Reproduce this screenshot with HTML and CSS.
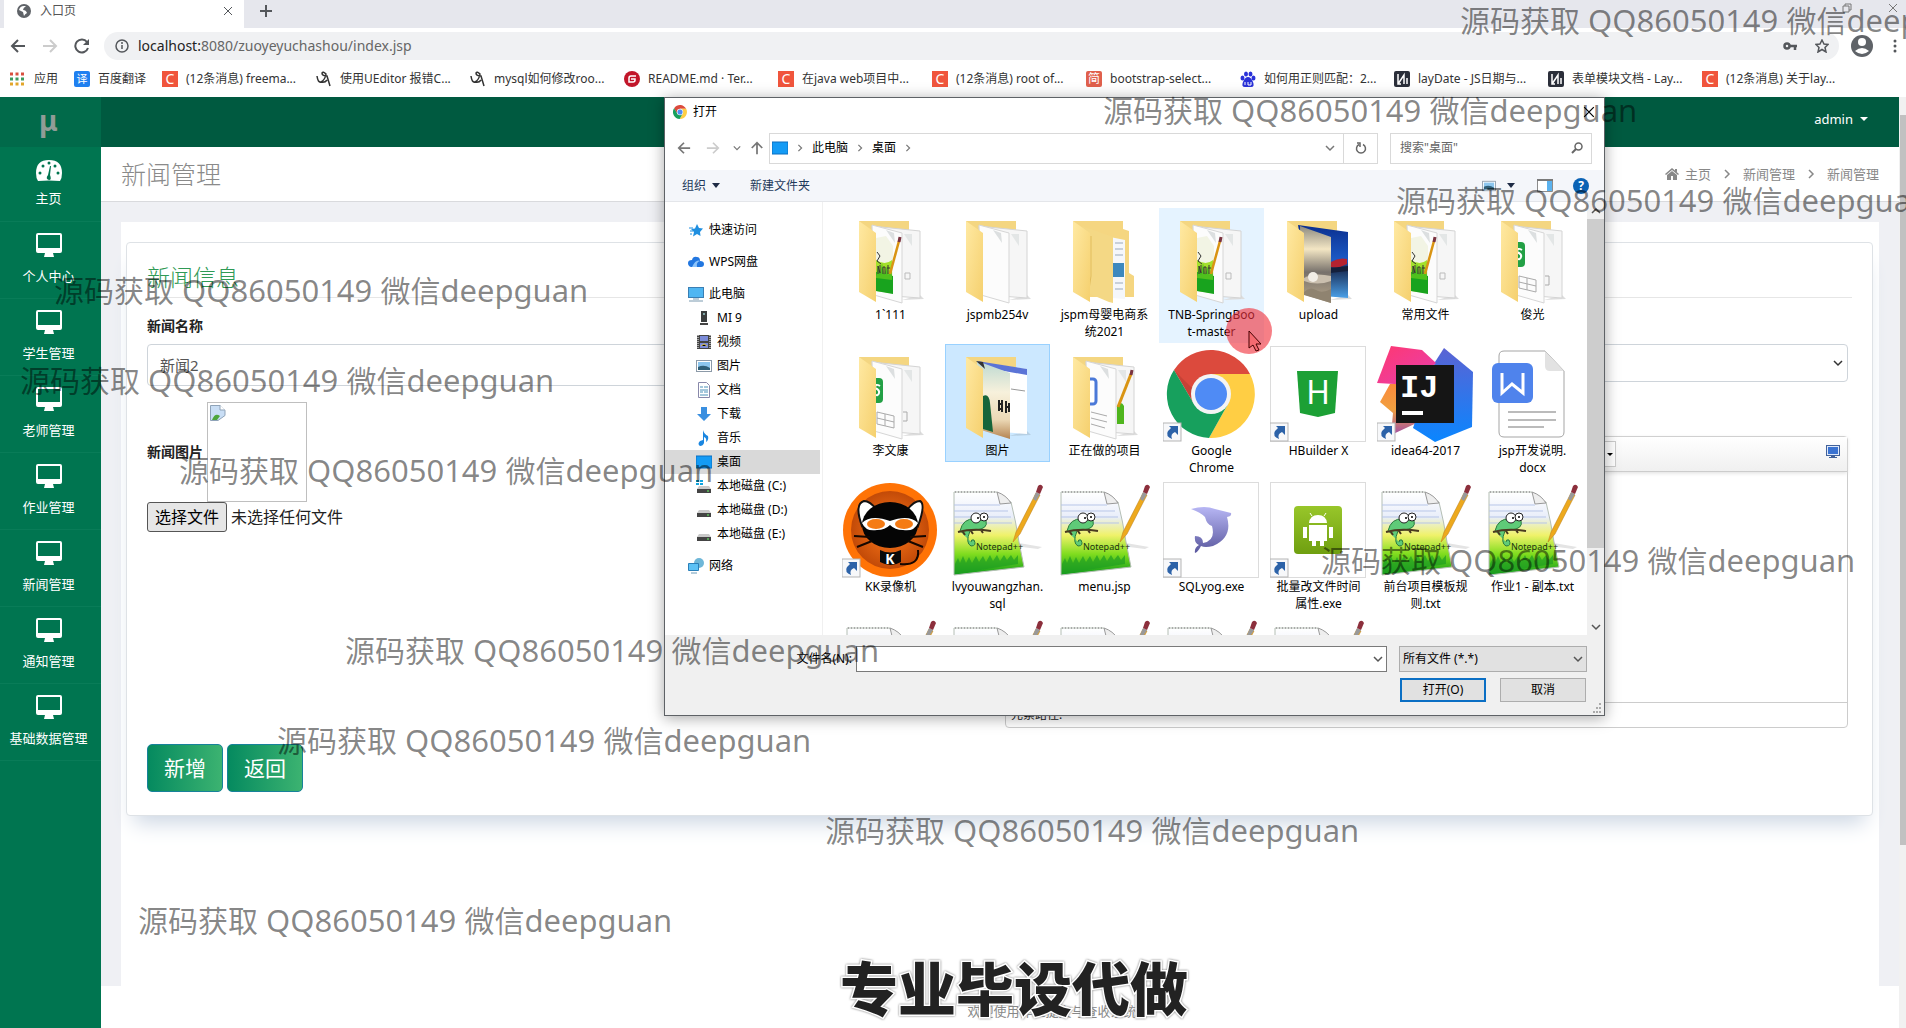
FILE: index.html
```html
<!DOCTYPE html>
<html lang="zh-CN">
<head>
<meta charset="utf-8">
<title>入口页</title>
<link rel="stylesheet" href="styles.css">
</head>
<body>
<svg class="sprite" aria-hidden="true">
  <defs>
    <linearGradient id="g-flap" x1="0" y1="0" x2="1" y2="1"><stop offset="0" stop-color="#ffe9a2"/><stop offset="1" stop-color="#f5d06e"/></linearGradient>
    <linearGradient id="g-note" x1="0" y1="0" x2="0" y2="1"><stop offset="0" stop-color="#fff"/><stop offset=".3" stop-color="#e9eefa"/><stop offset=".52" stop-color="#f0f26a"/><stop offset=".75" stop-color="#7fdc1e"/><stop offset="1" stop-color="#0c9a1c"/></linearGradient>
    <linearGradient id="g-sky" x1="0" y1="0" x2="0" y2="1"><stop offset="0" stop-color="#8d8a80"/><stop offset=".3" stop-color="#f3e6c4"/><stop offset=".6" stop-color="#77716b"/><stop offset="1" stop-color="#b9a88c"/></linearGradient>
    <linearGradient id="g-navy" x1="0" y1="0" x2="0" y2="1"><stop offset="0" stop-color="#0b2f8f"/><stop offset=".5" stop-color="#1c5cc8"/><stop offset=".6" stop-color="#182a52"/><stop offset="1" stop-color="#4aa0e8"/></linearGradient>
    <linearGradient id="g-poster" x1="0" y1="0" x2="0" y2="1"><stop offset="0" stop-color="#bcd9d2"/><stop offset=".4" stop-color="#f7f1dc"/><stop offset=".75" stop-color="#ecd9b6"/><stop offset="1" stop-color="#b48350"/></linearGradient>
    <linearGradient id="g-pink" x1="0" y1="0" x2="1" y2="1"><stop offset="0" stop-color="#fe3870"/><stop offset="1" stop-color="#e83fb0"/></linearGradient>
    <linearGradient id="g-blue" x1="0" y1="0" x2="0" y2="1"><stop offset="0" stop-color="#5b63d3"/><stop offset="1" stop-color="#0a86ff"/></linearGradient>
    <linearGradient id="g-orange" x1="0" y1="0" x2="0" y2="1"><stop offset="0" stop-color="#fb8a3c"/><stop offset=".5" stop-color="#f0a040"/><stop offset="1" stop-color="#a04da8"/></linearGradient>
    <linearGradient id="g-dolphin" x1="0" y1="0" x2="0" y2="1"><stop offset="0" stop-color="#b7b6f4"/><stop offset="1" stop-color="#5a589e"/></linearGradient>
    <linearGradient id="g-droid" x1="0" y1="0" x2="0" y2="1"><stop offset="0" stop-color="#98c62a"/><stop offset="1" stop-color="#6f9f10"/></linearGradient>
    <radialGradient id="g-kk"><stop offset="0" stop-color="#ff7a1a"/><stop offset="1" stop-color="#c24a08"/></radialGradient>

    <symbol id="folder-back" viewBox="0 0 96 96">
      <path d="M60 90l22-1-4-4z" fill="#ddd"/>
      <path d="M17 11h50v20H17z" fill="#f4d681"/>
      <path d="M30 16l48 5v67l-40-3z" fill="#f6f6f6" stroke="#d4d4d4"/>
      <path d="M62 24l8 12v-12z" fill="#e3e6e6"/>
      <path d="M30 15l30 8v70l-28-8z" fill="#fcfcfc" stroke="#d6d6d6"/>
      <path d="M44 20l8 3 1 10z" fill="#dcdfe0"/>
    </symbol>
    <symbol id="folder-flap" viewBox="0 0 96 96"><path d="M17 11l17 12v69l-17-10z" fill="url(#g-flap)"/></symbol>
    <symbol id="ico-empty" viewBox="0 0 96 96"><use href="#folder-back"/><use href="#folder-flap"/></symbol>
    <symbol id="ico-npp-folder" viewBox="0 0 96 96">
      <use href="#folder-back"/>
      <path d="M34 28l10-2 7 10v48l-17-3z" fill="#f2f4e4"/>
      <path d="M34 50q9 6 16 0v33l-16-2z" fill="#a4e02c"/><path d="M34 62l17 4v18l-17-3z" fill="#18a31e"/>
      <path d="M34 66l2-9 2 8 2-12 2 12 3-9 1 9 3-8 1 9v4l-16-2z" fill="#4fc11d"/>
      <path d="M35 42l3 4-3 5 4 3M36 64v-8l2 7v-8m3 9v-7h2v7m3 0v-9m-1 3h3" stroke="#333" fill="none"/>
      <path d="M57 31l-9 33" stroke="#d99413" stroke-width="2.500"/><path d="M58 27l-1 5" stroke="#7a3440" stroke-width="3"/>
      <path d="M63 63h5v6h-5z" fill="none" stroke="#bbb"/>
      <use href="#folder-flap"/>
    </symbol>
    <symbol id="ico-sheet-folder" viewBox="0 0 96 96">
      <use href="#folder-back"/>
      <path d="M30 32h7q4 0 4 4v17q0 4-4 4h-7z" fill="#23a045"/>
      <path d="M38 40q-5-3-5 2 5 2 4 5-1 4-5 1" stroke="#fff" stroke-width="2" fill="none"/>
      <path d="M35 66l17 4v12l-17-4zm0 6l17 4M43 68v12M61 66h4v9h-4" fill="none" stroke="#aaa"/>
      <use href="#folder-flap"/>
    </symbol>
    <symbol id="ico-closed-folder" viewBox="0 0 96 96">
      <path d="M17 11h50v8l6 2v42l5 3v21H30z" fill="#f5d681"/>
      <path d="M54 27l15 3v59l-13-1z" fill="#f5f7fa"/><path d="M59 33h8m-8 6h8m-8 6h8m-8 28h8m-8 6h8" stroke="#9aa9ba"/>
      <path d="M57 53h11v14H57z" fill="#3d88bd"/>
      <path d="M26 16l31 11v66l-4-1-19-8z" fill="#f4d885"/><path d="M35 26v40l-3 20" stroke="#e2bd5c" fill="none"/>
      <use href="#folder-flap"/>
    </symbol>
    <symbol id="ico-photo-folder" viewBox="0 0 96 96">
      <path d="M60 90l22-1-4-4z" fill="#ddd"/><path d="M17 11h50v20H17z" fill="#f4d681"/>
      <path d="M28 15l50 7v66l-38-3z" fill="url(#g-navy)"/><path d="M61 52q8-5 16-3v5l-9 4-7-1z" fill="#b52330"/><path d="M60 58l18-2v5l-18 2z" fill="#14203c"/>
      <path d="M30 16l31 11v66l-29-9z" fill="url(#g-sky)"/><path d="M34 68q10-6 27-2v5q-14 5-27 0z" fill="#cabfae"/><circle cx="43" cy="67" r="5" fill="#f2eee6"/><path d="M34 82q6-6 12-2t15-1v14l-27-8z" fill="#8f8370"/>
      <use href="#folder-flap"/>
    </symbol>
    <symbol id="ico-poster-folder" viewBox="0 0 96 96">
      <path d="M60 90l22-1-4-4z" fill="#b6cfe3"/><path d="M17 11h50v20H17z" fill="#f4d681"/>
      <path d="M28 16l50 7v65l-38-3z" fill="#fff"/><path d="M28 15l50 8v6L38 22z" fill="#5b74d6"/><path d="M62 43l14 2" stroke="#999"/>
      <path d="M28 15l33 12v66l-29-9z" fill="url(#g-poster)"/><path d="M50 54v11m3-11v12m4-11v12m3-10v9m-10-8h4m-4 5h4m2-2h4" stroke="#222" stroke-width="2"/>
      <path d="M34 50q6-3 7 7l3 29-10-3z" fill="#17653a"/><path d="M27 15l9 8-2-7z" fill="#333"/>
      <use href="#folder-flap"/>
    </symbol>
    <symbol id="ico-word-folder" viewBox="0 0 96 96">
      <use href="#folder-back"/>
      <rect x="28" y="33" width="12" height="25" rx="3" fill="#fff" stroke="#4b79d8" stroke-width="3"/>
      <path d="M35 66l16 4m-16 2l16 4m-16 2l14 4" stroke="#aaa"/>
      <path d="M61 60q4-6 7 0v18h-7z" fill="#4fb51d"/><path d="M75 28L62 61" stroke="#d99413" stroke-width="3"/><path d="M76 24l-1 5" stroke="#7a3440" stroke-width="3"/>
      <use href="#folder-flap"/>
    </symbol>
    <symbol id="ico-npp" viewBox="0 0 96 96">
      <path d="M64 60l29 5-4 2-24-3z" fill="#e4e4e4"/>
      <path d="M5 10h43q5 9 14 10 5 20 8 40l5 25L5 93z" fill="url(#g-note)" stroke="#b4beb4"/>
      <path d="M5 23h46M5 29h54M5 35h57M5 41h58" stroke="#b7c5e8"/>
      <path d="M6 10h42" stroke="#aaa" stroke-width="2" stroke-dasharray="1 2"/>
      <path d="M48 10l3 12 11-1q-5-8-14-11z" fill="#eee" stroke="#999"/>
      <path d="M6 82l3-6 2 5 3-7 3 7 3-6 3 6 4-7 3 6 4-6 3 6 4-7 3 6 4-6 3 6 4-6 3 5 4-5 3 5 4-5v9L6 92z" fill="#1f9e22" opacity=".7"/>
      <path d="M11 49q3-13 15-12l9-2q6 9-3 12l-11 2q-5 12 1 15 6 0 3-6-3-1-3 2" fill="#5fcb78" stroke="#2b7b3d"/>
      <path d="M9 50q15-4 33-1M14 50l2 3m6-4l2 3m8-4l2 3" stroke="#4a3a20" stroke-width="2" fill="none"/>
      <circle cx="27" cy="36" r="5" fill="#fff" stroke="#222"/><circle cx="35" cy="35" r="4" fill="#fff" stroke="#222"/><circle cx="29" cy="36" r="1"/><circle cx="35" cy="35" r="1"/>
      <text x="27" y="68" font-size="9" fill="#1b3310" class="svg-sans">Notepad++</text>
      <path d="M64 60l3-10 20-39 4 2-20 39z" fill="#eda91d" stroke="#b87c18" stroke-width=".5"/><path d="M84 17l3-7 4 2-4 7z" fill="#999"/><path d="M87 10l2-6q3-3 5 1l-3 7z" fill="#8c2f3c"/>
    </symbol>
    <symbol id="ico-chrome" viewBox="0 0 96 96">
      <path d="M11 24A44 44 0 0 1 87 28H48L31 58z" fill="#dc4a3d"/>
      <path d="M87 28A44 44 0 0 1 46 92L65 58 48 28z" fill="#ffce44"/>
      <path d="M46 92A44 44 0 0 1 11 24L31 58H65z" fill="#17a05d"/>
      <path d="M11 24l20 34 2-12z" fill="#a6372c" opacity=".4"/>
      <circle cx="48" cy="48" r="20" fill="#f4f4f4"/><circle cx="48" cy="48" r="16" fill="#4f8bf5"/>
    </symbol>
    <symbol id="shortcut" viewBox="0 0 96 96">
      <rect x="0" y="77" width="18" height="18" fill="#f7f8fa" stroke="#b5b5b5"/>
      <path d="M6 80h9v9l-3-3q-5 2-3 7-7-3-4-8l3-3z" fill="#2c62a8"/>
    </symbol>
    <symbol id="ico-hbuilder" viewBox="0 0 96 96">
      <rect width="95" height="95" x=".5" y=".5" fill="#fff" stroke="#dcdcdc"/>
      <path d="M27 25h41l-3 42-17 4-18-4z" fill="#1ca035"/><text x="48" y="58" font-size="32" text-anchor="middle" fill="#fff" class="svg-sans">H</text>
    </symbol>
    <symbol id="ico-idea" viewBox="0 0 96 96">
      <path d="M13 38L3 56l13 11-2 22 30-14-20-37z" fill="url(#g-orange)"/>
      <path d="M67 2l29 24-1 55-37 15-22-14L58 16z" fill="url(#g-blue)"/>
      <path d="M0 37L14 0l31 4 14 13-25 22z" fill="url(#g-pink)"/>
      <rect x="19" y="19" width="58" height="58" fill="#151515"/><text x="23" y="51" font-size="32" font-weight="bold" fill="#fff" class="svg-mono">IJ</text><path d="M25 65h21v4H25z" fill="#fff"/>
    </symbol>
    <symbol id="ico-docx" viewBox="0 0 96 96">
      <path d="M20 5h41l19 20v61q0 5-5 5H20q-5 0-5-5V10q0-5 5-5z" fill="#fff" stroke="#a5a5a5"/><path d="M61 5v15q0 5 5 5h14z" fill="#e2e2e2"/>
      <rect x="8" y="17" width="41" height="40" rx="6" fill="#4f83ec"/><path d="M18 27v20l10-9 11 9V27" fill="none" stroke="#fff" stroke-width="3"/>
      <path d="M24 66h48M24 74h48M24 81h36" stroke="#bbb" stroke-width="2"/>
    </symbol>
    <symbol id="ico-kk" viewBox="0 0 96 96">
      <circle cx="48" cy="48" r="47" fill="#ff7306"/><circle cx="48" cy="48" r="39" fill="url(#g-kk)"/>
      <path d="M20 44q-8-22 2-25 6 0 13 9zM76 44q8-22 2-25-6 0-13 9z" fill="#fff" stroke="#111" stroke-width="2"/>
      <ellipse cx="48" cy="43" rx="28" ry="23" fill="#050505"/>
      <path d="M20 41q9-9 28-2 19-7 28 2-4 9-15 7-8 0-13-5-5 5-13 5-11 2-15-7z" fill="#fff"/>
      <ellipse cx="34" cy="42" rx="9" ry="5" fill="#f57b14"/><ellipse cx="62" cy="42" rx="9" ry="5" fill="#f57b14"/>
      <path d="M12 54l16 1M15 65l15-6M84 54l-16 1M81 65l-15-6M58 82q20 2 18-14" stroke="#160700" stroke-width="2" fill="none"/>
      <path d="M38 68q10 5 21 0v12q-10 6-21 0z" fill="#0a0a0a"/><text x="48" y="82" font-size="14" font-weight="bold" text-anchor="middle" fill="#fff" class="svg-sans">K</text>
    </symbol>
    <symbol id="ico-dolphin" viewBox="0 0 96 96">
      <rect width="95" height="95" x=".5" y=".5" fill="#fff" stroke="#dcdcdc"/>
      <path d="M28 27q14-4 24 0l16 4q1 3-4 4 6 20-14 29-8 2-12 0-3 6-6 7-1-5 4-8-5-2-4-9 8 0 8 7 13-2 9-17-5-1-7-9-5-5-14-8z" fill="url(#g-dolphin)"/>
    </symbol>
    <symbol id="ico-android" viewBox="0 0 96 96">
      <rect width="95" height="95" x=".5" y=".5" fill="#fff" stroke="#dcdcdc"/>
      <rect x="24" y="24" width="48" height="48" rx="4" fill="url(#g-droid)"/>
      <path d="M39 41q1-8 9-8t9 8zM39 43h18v16H39zM33 45h4v11h-4zM59 45h4v11h-4zM42 57h4v7h-4zM50 57h4v7h-4z" fill="#fff"/><path d="M42 34l-2-3M54 34l2-3" stroke="#fff"/>
    </symbol>

    <symbol id="monitor" viewBox="0 0 28 24"><path d="M3 0h22q2 0 2 2v16q0 2-2 2h-7l1 4H9l1-4H3q-2 0-2-2V2q0-2 2-2zm0 2v13h22V2z" fill="#fff" fill-rule="evenodd"/></symbol>
    <symbol id="csdn" viewBox="0 0 16 16"><rect width="16" height="16" fill="#f0553c"/><text x="8" y="13" font-size="14" text-anchor="middle" fill="#fff" class="svg-sans">C</text></symbol>
    <symbol id="curl" viewBox="0 0 16 16"><path d="M1 5q1 7 4 6 4-2 5-8-3-3-4-1 0 3 5 3l3 10M5 11q4 1 6-2" fill="none" stroke="#333" stroke-width="1.500"/></symbol>
    <symbol id="layui" viewBox="0 0 16 16"><rect width="16" height="16" rx="2" fill="#2b2f3a"/><path d="M4 3v10h3M4 13l6-9v9m3-6v6" fill="none" stroke="#fff" stroke-width="1.500"/></symbol>
    <symbol id="disk" viewBox="0 0 16 16"><path d="M3 8h10l2 3H1z" fill="#c9c9c9"/><path d="M1 11h14v4H1z" fill="#444"/><path d="M11 13h2" stroke="#6f6"/></symbol>
    <symbol id="desk" viewBox="0 0 16 14"><rect width="16" height="12" y="1" fill="#149bf5" stroke="#0a6fc0"/></symbol>
    <symbol id="pic" viewBox="0 0 16 14"><rect x=".5" y="1.500" width="15" height="11" fill="#fff" stroke="#8c9aa8"/><path d="M2 3h12v8H2z" fill="#8cc6ee"/><path d="M2 8q6-3 12 1v2H2z" fill="#2f5f78"/></symbol>
    <symbol id="chev-d" viewBox="0 0 10 10"><path d="M1 3l4 4 4-4" fill="none" stroke="currentColor" stroke-width="1.500"/></symbol>
    <symbol id="chev-r" viewBox="0 0 10 10"><path d="M3 1l4 4-4 4" fill="none" stroke="currentColor" stroke-width="1.500"/></symbol>
    <symbol id="arrow" viewBox="0 0 16 16"><path d="M15 8H2m6-6L2 8l6 6" fill="none" stroke="currentColor" stroke-width="2"/></symbol>
    <symbol id="close" viewBox="0 0 10 10"><path d="M1 1l8 8M9 1L1 9" stroke="currentColor"/></symbol>
  </defs>
</svg>

<header class="browser">
  <div class="tabs">
    <div class="tab">
      <svg width="14" height="14" viewBox="0 0 14 14"><circle cx="7" cy="7" r="7" fill="#5f6368"/><path d="M7 2q-4 0-5 4l4 2 1 4q1-2 3-3-1-3-4-3 0-2 3-4z" fill="#fff"/></svg>
      <span class="tab-title">入口页</span>
      <svg class="dark" width="10" height="10"><use href="#close"/></svg>
    </div>
    <svg class="dark new-tab" width="14" height="14" viewBox="0 0 14 14"><path d="M7 1v12M1 7h12" stroke="currentColor" stroke-width="2"/></svg>
    <svg class="win-icon" width="10" height="10" viewBox="0 0 10 10"><path d="M3 3V1h6v6H7M1 3h6v6H1z" fill="none" stroke="#777"/></svg>
    <svg class="win-icon" width="10" height="10"><use href="#close"/></svg>
  </div>
  <div class="toolbar">
    <svg class="dark" width="16" height="16"><use href="#arrow"/></svg>
    <svg class="faint flip" width="16" height="16"><use href="#arrow"/></svg>
    <svg class="dark" width="16" height="16" viewBox="0 0 16 16"><path d="M13 4a6.500 6.500 0 1 0 1 6" fill="none" stroke="currentColor" stroke-width="2"/><path d="M15 1v6H9z" fill="currentColor"/></svg>
    <div class="omnibox">
      <svg class="dark" width="14" height="14" viewBox="0 0 14 14"><circle cx="7" cy="7" r="6" fill="none" stroke="currentColor" stroke-width="1.500"/><path d="M7 6v4M7 3v2" stroke="currentColor" stroke-width="1.500"/></svg>
      <span class="url"><b>localhost:</b>8080/zuoyeyuchashou/index.jsp</span>
      <svg class="dark" width="14" height="10" viewBox="0 0 14 10"><circle cx="4" cy="5" r="2.500" fill="none" stroke="currentColor" stroke-width="2.500"/><path d="M7 5h7M12 5v4" stroke="currentColor" stroke-width="2.500"/></svg>
      <svg class="dark" width="14" height="14" viewBox="0 0 14 14"><path d="M7 1l2 4 4 .5-3 3 1 4.500-4-2.500L3 13l1-4.500-3-3L5 5z" fill="none" stroke="currentColor" stroke-width="1.500"/></svg>
    </div>
    <svg width="22" height="22" viewBox="0 0 22 22"><circle cx="11" cy="11" r="11" fill="#5f6368"/><circle cx="11" cy="7" r="4" fill="#fff"/><path d="M4 16q7-6 14 0-7 6-14 0z" fill="#fff"/></svg>
    <svg class="dark" width="4" height="14" viewBox="0 0 4 14"><circle cx="2" cy="2" r="1.500"/><circle cx="2" cy="7" r="1.500"/><circle cx="2" cy="12" r="1.500"/></svg>
  </div>
  <nav class="bookmarks" aria-label="书签">
    <a href="#" class="bm bm-apps"><svg width="14" height="14" viewBox="0 0 14 14"><path d="M0 2h14" stroke="#d9503f" stroke-width="3" stroke-dasharray="3 2.500"/><path d="M0 7h14" stroke="#3c9a5f" stroke-width="3" stroke-dasharray="3 2.500"/><path d="M0 12h14" stroke="#e2a52a" stroke-width="3" stroke-dasharray="3 2.500"/></svg>应用</a>
    <a href="#" class="bm bm-short"><svg width="16" height="16" viewBox="0 0 16 16"><rect width="16" height="16" rx="2" fill="#1f80f0"/><text x="8" y="12" font-size="11" text-anchor="middle" fill="#fff" class="svg-sans">译</text></svg>百度翻译</a>
    <a href="#" class="bm"><svg width="16" height="16"><use href="#csdn"/></svg>(12条消息) freema...</a>
    <a href="#" class="bm"><svg width="16" height="16"><use href="#curl"/></svg>使用UEditor 报错C...</a>
    <a href="#" class="bm"><svg width="16" height="16"><use href="#curl"/></svg>mysql如何修改roo...</a>
    <a href="#" class="bm"><svg width="16" height="16" viewBox="0 0 16 16"><circle cx="8" cy="8" r="8" fill="#c2162a"/><path d="M12 5H7q-2 0-2 2v4h4q2 0 2-2V8H7" fill="none" stroke="#fff" stroke-width="1.500"/></svg>README.md · Ter...</a>
    <a href="#" class="bm"><svg width="16" height="16"><use href="#csdn"/></svg>在java web项目中...</a>
    <a href="#" class="bm"><svg width="16" height="16"><use href="#csdn"/></svg>(12条消息) root of...</a>
    <a href="#" class="bm"><svg width="16" height="16" viewBox="0 0 16 16"><rect width="16" height="16" rx="2" fill="#e0604c"/><text x="8" y="12" font-size="12" text-anchor="middle" fill="#fff" class="svg-sans">简</text></svg>bootstrap-select...</a>
    <a href="#" class="bm"><svg width="16" height="16" viewBox="0 0 16 16"><g fill="#2a32d8"><ellipse cx="2.500" cy="7" rx="2" ry="2.500"/><ellipse cx="6" cy="3" rx="2" ry="2.500"/><ellipse cx="10.500" cy="3" rx="2" ry="2.500"/><ellipse cx="13.500" cy="7" rx="2" ry="2.500"/><path d="M8 6q3 0 5 5t-2 5H5q-4 0-2-5 2-5 5-5z"/></g><path d="M5 11v3m3-3v3h3v-3" stroke="#fff" fill="none"/></svg>如何用正则匹配：2...</a>
    <a href="#" class="bm"><svg width="16" height="16"><use href="#layui"/></svg>layDate - JS日期与...</a>
    <a href="#" class="bm"><svg width="16" height="16"><use href="#layui"/></svg>表单模块文档 - Lay...</a>
    <a href="#" class="bm"><svg width="16" height="16"><use href="#csdn"/></svg>(12条消息) 关于lay...</a>
  </nav>
</header>

<div class="page">
  <aside class="side">
    <div class="brand">μ</div>
    <nav>
      <a href="#" class="side-item"><svg width="28" height="24" viewBox="0 0 28 24"><path d="M3 22Q1 19 1 14 1 1 14 1t13 13q0 5-2 8-11-1-22 0z" fill="#fff"/><g fill="#007550"><circle cx="5" cy="14" r="1.500"/><circle cx="8" cy="7" r="1.500"/><circle cx="14" cy="4" r="1.500"/><circle cx="20" cy="7" r="1.500"/><circle cx="23" cy="14" r="1.500"/><path d="M15 7h1l-1 9q2 5-1 5-4-1-1-5z"/></g></svg>主页</a>
      <a href="#" class="side-item"><svg width="28" height="24"><use href="#monitor"/></svg>个人中心</a>
      <a href="#" class="side-item"><svg width="28" height="24"><use href="#monitor"/></svg>学生管理</a>
      <a href="#" class="side-item"><svg width="28" height="24"><use href="#monitor"/></svg>老师管理</a>
      <a href="#" class="side-item"><svg width="28" height="24"><use href="#monitor"/></svg>作业管理</a>
      <a href="#" class="side-item"><svg width="28" height="24"><use href="#monitor"/></svg>新闻管理</a>
      <a href="#" class="side-item"><svg width="28" height="24"><use href="#monitor"/></svg>通知管理</a>
      <a href="#" class="side-item"><svg width="28" height="24"><use href="#monitor"/></svg>基础数据管理</a>
    </nav>
  </aside>
  <main class="main">
    <div class="topbar"><button type="button" class="user">admin</button></div>
    <div class="title-row">
      <h1>新闻管理</h1>
      <nav class="crumbs" aria-label="位置">
        <a href="#"><svg width="14" height="12" viewBox="0 0 14 12"><path d="M7 0l7 6-1 1-6-5-6 5-1-1zM10 1h2v3l-2-1zM7 3l5 4v5H8V8H6v4H2V7z" fill="#888"/></svg>主页</a>
        <svg width="10" height="10"><use href="#chev-r"/></svg>
        <a href="#">新闻管理</a>
        <svg width="10" height="10"><use href="#chev-r"/></svg>
        <span>新闻管理</span>
      </nav>
    </div>
    <div class="content">
      <div class="panel">
        <form class="card">
          <h2>新闻信息</h2>
          <div class="form-grid">
            <div>
              <label class="lbl" for="name">新闻名称</label>
              <input class="text-in" id="name" type="text" value="新闻2">
              <div class="image-row">
                <label class="lbl" for="photo">新闻图片</label>
                <div class="thumb"><svg width="16" height="16" viewBox="0 0 16 16"><path d="M.5.500H10l5 5v5l-7 5H.5z" fill="#c9def5" stroke="#8fa3b8"/><path d="M2 15q3-8 8-4l-3 4z" fill="#4da63c"/><path d="M10 0v5h5" fill="#fff" stroke="#8fa3b8"/></svg></div>
              </div>
              <div class="file-row">
                <input class="file-in" type="file" id="photo">
                <label class="file-btn" for="photo">选择文件</label><span>未选择任何文件</span>
              </div>
            </div>
            <div>
              <label class="lbl" for="kind">新闻类型</label>
              <div class="select-wrap"><select class="select-in" id="kind"><option></option></select><svg width="10" height="10"><use href="#chev-d"/></svg></div>
              <label class="lbl detail-lbl" for="detail">新闻详情</label>
              <div class="editor">
                <div class="ed-bar">
                  <button type="button" class="ed-drop" aria-label="更多"></button>
                  <svg width="14" height="14" viewBox="0 0 14 14"><rect x=".5" y=".5" width="13" height="10" fill="#dfe9fa" stroke="#42629b"/><path d="M2 2h10v7H2z" fill="#3b73d1"/><path d="M5 11h4v1h2v1H3v-1h2z" fill="#42629b"/></svg>
                </div>
                <textarea id="detail"></textarea>
                <div class="ed-path">元素路径:</div>
              </div>
            </div>
          </div>
          <div class="actions"><button type="button" class="btn">新增</button><button type="button" class="btn">返回</button></div>
        </form>
      </div>
    </div>
    <footer class="foot">欢迎使用作业提交与查收系统</footer>
  </main>
  <div class="page-scroll"><div class="page-thumb"></div></div>
</div>

<section class="dialog" role="dialog" aria-label="打开">
  <div class="dlg-title"><svg width="14" height="14" viewBox="4 4 88 88"><use href="#ico-chrome" width="96" height="96"/></svg><span>打开</span><svg class="dlg-close" width="12" height="12"><use href="#close"/></svg></div>
  <div class="dlg-nav">
    <svg class="grey" width="14" height="14"><use href="#arrow"/></svg>
    <svg class="faint flip" width="14" height="14"><use href="#arrow"/></svg>
    <svg class="grey recent" width="8" height="8"><use href="#chev-d"/></svg>
    <svg class="grey up" width="14" height="14"><use href="#arrow"/></svg>
    <div class="addr">
      <svg width="16" height="14"><use href="#desk"/></svg>
      <svg class="grey" width="8" height="8"><use href="#chev-r"/></svg><span>此电脑</span>
      <svg class="grey" width="8" height="8"><use href="#chev-r"/></svg><span>桌面</span>
      <svg class="grey" width="8" height="8"><use href="#chev-r"/></svg>
      <svg class="grey addr-drop" width="10" height="10"><use href="#chev-d"/></svg>
      <button type="button" class="refresh" aria-label="刷新"><svg width="12" height="12" viewBox="0 0 12 12"><path d="M8 2.500a4.500 4.500 0 1 1-4 0M2 1h3v4" fill="none" stroke="#666" stroke-width="1.500"/></svg></button>
    </div>
    <div class="search"><input type="search" aria-label="搜索" placeholder='搜索"桌面"'><svg width="12" height="12" viewBox="0 0 12 12"><circle cx="7.500" cy="4.500" r="3.500" fill="none" stroke="#666" stroke-width="1.500"/><path d="M5 7l-4 4" stroke="#666" stroke-width="2"/></svg></div>
  </div>
  <div class="dlg-tools">
    <button type="button">组织<i class="tri"></i></button>
    <button type="button">新建文件夹</button>
    <svg class="view" width="14" height="12"><use href="#pic"/></svg><i class="tri"></i>
    <svg class="split" width="16" height="13" viewBox="0 0 16 13"><path d="M.5.500h15v12H.5z" fill="#fff" stroke="#8c8c8c"/><path d="M10 1h5v11h-5z" fill="#5bb2ee"/><path d="M0 1h16" stroke="#7a7a7a" stroke-width="2"/></svg>
    <svg width="16" height="16" viewBox="0 0 16 16"><circle cx="8" cy="8" r="8" fill="#0b63b5"/><text x="8" y="12" font-size="12" font-weight="bold" text-anchor="middle" fill="#fff" class="svg-sans">?</text></svg>
  </div>
  <div class="dlg-body">
    <nav class="tree" aria-label="位置">
      <a href="#" class="root"><svg width="16" height="16" viewBox="0 0 16 16"><path d="M9 2l2 4 4 .5-3 3.500.5 4-3.500-2-4 2.500 1-4.500-3-3 4-.5z" fill="#1f8fe0"/><path d="M1 6h4M2 9h3M2 12h2" stroke="#1f8fe0"/></svg>快速访问</a>
      <a href="#" class="root"><svg width="16" height="16" viewBox="0 0 16 16"><path d="M3 13q-3-1-3-4t4-3q1-4 5-3 3 0 3 4 4 0 4 3t-3 3z" fill="#2277e0"/><path d="M4 13q4-8 8-6-4 1-3 6z" fill="#8cc4fb"/></svg>WPS网盘</a>
      <a href="#" class="root"><svg width="16" height="16" viewBox="0 0 16 16"><rect x=".5" y="1.500" width="15" height="10" fill="#4fb6f2" stroke="#3a7fb4"/><path d="M5 13h6M1 15h14" stroke="#7a9ab0"/></svg>此电脑</a>
      <a href="#"><svg width="16" height="16" viewBox="0 0 16 16"><path d="M5 1h6v11H5z" fill="#3a3d3d"/><circle cx="8" cy="4" r="1" fill="#9cc"/><path d="M4 14h8" stroke="#444" stroke-width="2"/></svg>MI 9</a>
      <a href="#"><svg width="16" height="16" viewBox="0 0 16 16"><path d="M1 1h14v14H1z" fill="#444"/><path d="M4 2h8v5H4zM4 9h8v5H4z" fill="#7b8bd8"/><path d="M2 1v14M14 1v14" stroke="#fff" stroke-dasharray="1 1"/><path d="M5 12l3-2 3 2" stroke="#e3c54f"/></svg>视频</a>
      <a href="#"><svg width="16" height="14"><use href="#pic"/></svg>图片</a>
      <a href="#"><svg width="16" height="16" viewBox="0 0 16 16"><path d="M2.500.500h8l3 3v12h-11z" fill="#fff" stroke="#88a"/><path d="M4 5h3m1 0h4M4 8h8M4 10h3m1 0h4M4 13h8" stroke="#4a90b8"/></svg>文档</a>
      <a href="#"><svg width="16" height="16" viewBox="0 0 16 16"><path d="M5 1h6v7h4l-7 7-7-7h4z" fill="#3a8fe0"/></svg>下载</a>
      <a href="#"><svg width="16" height="16" viewBox="0 0 16 16"><path d="M7 0q1 4 5 6 1 4-2 6 1-4-2-5v6q-1 3-4 3-3-2 0-5l3-1z" fill="#1a86e0"/></svg>音乐</a>
      <a href="#" class="on"><svg width="16" height="14"><use href="#desk"/></svg>桌面</a>
      <a href="#"><svg width="16" height="16" viewBox="0 0 16 16"><path d="M0 2h3v2H0zM4 2h3v2H4zM0 5h3v2H0zM4 5h3v2H4z" fill="#12a5e0"/><use href="#disk"/></svg>本地磁盘 (C:)</a>
      <a href="#"><svg width="16" height="16"><use href="#disk"/></svg>本地磁盘 (D:)</a>
      <a href="#"><svg width="16" height="16"><use href="#disk"/></svg>本地磁盘 (E:)</a>
      <a href="#" class="root last"><svg width="16" height="16" viewBox="0 0 16 16"><circle cx="11" cy="5" r="5" fill="#6fb7d8"/><path d="M.5 5.500h10v7H.5z" fill="#5cc1f5" stroke="#2a7fb8"/><path d="M3 15h6" stroke="#6a9ab8"/></svg>网络</a>
    </nav>
    <div class="files">
      <div class="file"><svg><use href="#ico-npp-folder"/></svg>1`111</div>
      <div class="file"><svg><use href="#ico-empty"/></svg>jspmb254v</div>
      <div class="file"><svg><use href="#ico-closed-folder"/></svg>jspm母婴电商系<br>统2021</div>
      <div class="file hover"><svg><use href="#ico-npp-folder"/></svg>TNB-SpringBoo<br>t-master</div>
      <div class="file"><svg><use href="#ico-photo-folder"/></svg>upload</div>
      <div class="file"><svg><use href="#ico-npp-folder"/></svg>常用文件</div>
      <div class="file"><svg><use href="#ico-sheet-folder"/></svg>俊光</div>

      <div class="file"><svg><use href="#ico-sheet-folder"/></svg>李文康</div>
      <div class="file picked"><svg><use href="#ico-poster-folder"/></svg>图片</div>
      <div class="file"><svg><use href="#ico-word-folder"/></svg>正在做的项目</div>
      <div class="file"><svg><use href="#ico-chrome"/><use href="#shortcut"/></svg>Google<br>Chrome</div>
      <div class="file"><svg><use href="#ico-hbuilder"/><use href="#shortcut"/></svg>HBuilder X</div>
      <div class="file"><svg><use href="#ico-idea"/><use href="#shortcut"/></svg>idea64-2017</div>
      <div class="file"><svg><use href="#ico-docx"/></svg>jsp开发说明.<br>docx</div>

      <div class="file"><svg><use href="#ico-kk"/><use href="#shortcut"/></svg>KK录像机</div>
      <div class="file"><svg><use href="#ico-npp"/></svg>lvyouwangzhan.<br>sql</div>
      <div class="file"><svg><use href="#ico-npp"/></svg>menu.jsp</div>
      <div class="file"><svg><use href="#ico-dolphin"/><use href="#shortcut"/></svg>SQLyog.exe</div>
      <div class="file"><svg><use href="#ico-android"/><use href="#shortcut"/></svg>批量改文件时间<br>属性.exe</div>
      <div class="file"><svg><use href="#ico-npp"/></svg>前台项目模板规<br>则.txt</div>
      <div class="file"><svg><use href="#ico-npp"/></svg>作业1 - 副本.txt</div>

      <div class="file"><svg><use href="#ico-npp"/></svg></div>
      <div class="file"><svg><use href="#ico-npp"/></svg></div>
      <div class="file"><svg><use href="#ico-npp"/></svg></div>
      <div class="file"><svg><use href="#ico-npp"/></svg></div>
      <div class="file"><svg><use href="#ico-npp"/></svg></div>
    </div>
    <div class="dlg-scroll">
      <svg class="flip-v" width="10" height="10"><use href="#chev-d"/></svg>
      <div class="dlg-thumb"></div>
      <svg width="10" height="10"><use href="#chev-d"/></svg>
    </div>
  </div>
  <div class="dlg-foot">
    <div class="foot-row">
      <label for="fname">文件名(N):</label>
      <div class="combo"><input id="fname" type="text"><svg width="10" height="10"><use href="#chev-d"/></svg></div>
      <div class="filter"><select aria-label="文件类型"><option>所有文件 (*.*)</option></select><svg width="10" height="10"><use href="#chev-d"/></svg></div>
    </div>
    <div class="foot-row foot-btns">
      <button type="button" class="dlg-btn primary">打开(O)</button>
      <button type="button" class="dlg-btn">取消</button>
    </div>
    <svg class="grip" width="10" height="10" viewBox="0 0 10 10"><path d="M7 1h2M4 5h2M7 5h2M1 9h2M4 9h2M7 9h2" stroke="#aaa" stroke-width="2"/></svg>
  </div>
</section>

<svg class="pointer" width="48" height="48" viewBox="0 0 48 48"><circle cx="24" cy="24" r="23" fill="#f0303c" fill-opacity=".62"/><path d="M24 24v17l4-3 3 6 3-1-3-6h5z" fill="#f46a70" stroke="#400" stroke-width="1"/></svg>

<div class="marks" aria-hidden="true">
  <span class="mark m1">源码获取<b> QQ86050149 </b>微信<b>deepguan</b></span>
  <span class="mark m2">源码获取<b> QQ86050149 </b>微信<b>deepguan</b></span>
  <span class="mark m3">源码获取<b> QQ86050149 </b>微信<b>deepguan</b></span>
  <span class="mark m4">源码获取<b> QQ86050149 </b>微信<b>deepguan</b></span>
  <span class="mark m5">源码获取<b> QQ86050149 </b>微信<b>deepguan</b></span>
  <span class="mark m6">源码获取<b> QQ86050149 </b>微信<b>deepguan</b></span>
  <span class="mark m7">源码获取<b> QQ86050149 </b>微信<b>deepguan</b></span>
  <span class="mark m8">源码获取<b> QQ86050149 </b>微信<b>deepguan</b></span>
  <span class="mark m9">源码获取<b> QQ86050149 </b>微信<b>deepguan</b></span>
  <span class="mark m10">源码获取<b> QQ86050149 </b>微信<b>deepguan</b></span>
  <span class="mark m11">源码获取<b> QQ86050149 </b>微信<b>deepguan</b></span>
</div>
<p class="caption">专业毕设代做</p>
</body>
</html>
```
FILE: styles.css
```css
* { box-sizing: border-box; }
body {
  margin: 0;
  min-height: 100vh;
  display: flex;
  flex-direction: column;
  position: relative;
  overflow: hidden;
  background: #fff;
  color: #222;
  font: 12px/16px "Noto Sans", "Noto Sans CJK SC", sans-serif;
}
a { color: inherit; text-decoration: none; }
button, input, select, textarea { font: inherit; color: inherit; }
svg { flex: none; display: block; }
.sprite { position: absolute; width: 0; height: 0; }
.svg-sans { font-family: "Noto Sans", "Noto Sans CJK SC", sans-serif; }
.svg-mono { font-family: "Liberation Mono", monospace; }
.dark { color: #54575b; fill: currentColor; }
.faint { color: #ccc; }
.grey { color: #777; }
.flip { transform: scaleX(-1); }
.flip-v { transform: scaleY(-1); }
.up { transform: rotate(90deg); }

/* Browser frame */
.browser { flex: none; }
.tabs { display: flex; align-items: flex-start; height: 28px; padding-left: 4px; background: #e6e7ed; }
.tab { display: flex; align-items: center; width: 240px; height: 28px; padding: 0 11px 6px 13px; background: #fff; }
.tab-title { flex: 1; margin-left: 9px; color: #555; }
.new-tab { margin: 4px auto 0 15px; }
.win-icon { margin: 3px 8px 0 28px; color: #777; }
.toolbar { display: flex; align-items: center; gap: 16px; height: 36px; padding: 0 9px 0 10px; }
.omnibox { flex: 1; display: flex; align-items: center; gap: 18px; height: 28px; margin-left: -2px; padding: 0 10px 0 11px; border-radius: 14px; background: #f0f1f3; }
.url { flex: 1; margin-left: -9px; font-size: 14px; line-height: 20px; color: #666; }
.url b { font-weight: normal; color: #222; }
.toolbar > svg:last-child { margin-left: 4px; }
.omnibox + svg { margin-left: -4px; }
.bookmarks { display: flex; align-items: center; height: 33px; padding: 0 10px 4px; overflow: hidden; }
.bm { flex: none; display: flex; align-items: center; gap: 8px; width: 154px; color: #333; white-space: nowrap; }
.bm-apps { gap: 10px; width: 64px; }
.bm-short { width: 88px; }

/* Admin page */
.page { flex: 1; display: flex; }
.side { flex: none; width: 101px; background: #007550; color: #fff; }
.brand { display: flex; align-items: center; justify-content: center; height: 50px; padding: 0 4px 4px 0; background: #016a4a; color: #919c97; font-size: 28px; font-weight: bold; line-height: 32px; }
.side-item { display: flex; flex-direction: column; align-items: center; gap: 10px; height: 77px; padding: 11px 4px 0 0; border-bottom: 1px solid #097c58; font-size: 13px; line-height: 18px; white-space: nowrap; }
.side-item:first-child { padding-top: 12px; height: 75px; gap: 6px; }
.main { flex: 1; display: flex; flex-direction: column; min-width: 0; }
.topbar { display: flex; align-items: center; justify-content: flex-end; height: 50px; padding: 0 31px 6px; background: #005a40; }
.user { display: flex; align-items: center; gap: 7px; padding: 0; border: 0; background: none; color: #fff; font-size: 13px; line-height: 18px; }
.user::after { content: ""; border: 4px solid transparent; border-top-color: #fff; border-bottom: 0; }
.title-row { display: flex; align-items: center; justify-content: space-between; height: 55px; padding: 0 20px; border-bottom: 1px solid #d9dadd; }
h1 { margin: 0; font-size: 25px; font-weight: 300; line-height: 32px; color: #8a8a8a; }
.crumbs { display: flex; align-items: center; gap: 11px; font-size: 13px; line-height: 18px; color: #888; }
.crumbs a { display: flex; align-items: center; gap: 6px; }
.content { padding: 20px 20px 0; background: #eff0f4; }
.panel { padding: 20px 6px 170px 5px; background: #fff; }
.card { border: 1px solid #dee2e6; border-radius: 4px; box-shadow: 0 15px 20px -8px #ccd6e3; padding: 0 20px 23px; background: #fff; }
h2 { margin: 0; height: 55px; padding-top: 18px; border-bottom: 1px solid #e6e6e6; font-size: 23px; font-weight: 300; line-height: 32px; color: #2f9a55; }
.form-grid { display: grid; grid-template-columns: 1fr 1fr; gap: 15px; padding: 18px 4px 0 0; }
.lbl { display: block; font-size: 14px; font-weight: bold; line-height: 20px; }
.text-in { display: block; width: 100%; height: 42px; margin-top: 8px; padding: 0 12px 2px; border: 1px solid #ced4da; border-radius: 4px; font-size: 15px; color: #555; }
.image-row { display: flex; align-items: center; gap: 4px; margin-top: 16px; }
.thumb { width: 100px; height: 100px; padding: 2px; border: 1px solid #bfbfbf; }
.file-row { display: flex; align-items: center; gap: 4px; font-size: 16px; line-height: 24px; }
.file-in { position: absolute; width: 1px; height: 1px; opacity: 0; }
.file-btn { padding: 2px 7px; border: 1px solid #555; border-radius: 3px; background: #e6e6e6; color: #000; }
.select-wrap { position: relative; margin-top: 8px; }
.select-in { display: block; width: 100%; height: 38px; appearance: none; border: 1px solid #ced4da; border-radius: 4px; background: #fff; }
.select-wrap svg { position: absolute; right: 5px; top: 14px; color: #333; }
.detail-lbl { margin: 26px 0 8px; }
.editor { border: 1px solid #ccc; border-radius: 4px; }
.ed-bar { display: flex; align-items: center; justify-content: flex-end; gap: 210px; height: 35px; padding: 0 7px 4px; background: linear-gradient(#fff, #f0f0f0); border-bottom: 1px solid #ccc; box-shadow: 0 1px 4px #ddd; }
.ed-drop { display: flex; align-items: center; justify-content: center; width: 12px; height: 26px; margin-top: 4px; padding: 0; border: 1px solid #ccc; background: #fff; }
.ed-drop::after { content: ""; border: 3px solid transparent; border-top-color: #000; border-bottom: 0; }
.editor textarea { display: block; width: 100%; height: 230px; border: 0; resize: none; background: none; }
.ed-path { height: 25px; padding: 4px 5px; border-top: 1px solid #ccc; }
.actions { display: flex; gap: 4px; padding-top: 16px; }
.btn { width: 76px; height: 48px; padding: 0; border: 1px solid #17829a; border-radius: 5px; background: linear-gradient(90deg, #058a5f, #3cb371); color: #fff; font-size: 21px; line-height: 28px; }
.foot { flex: 1; padding: 16px 0 0 104px; color: #888; font-size: 13px; line-height: 18px; text-align: center; }
.page-scroll { flex: none; width: 7px; padding: 18px 0 0 1px; background: #f1f1f1; }
.page-thumb { height: 80%; background: #c1c1c1; }

/* File dialog */
.dialog { position: absolute; left: 664px; top: 97px; width: 941px; border: 1px solid #5e6266; background: #fff; box-shadow: 0 2px 14px rgba(0, 0, 0, .35); color: #000; }
.dlg-title { display: flex; align-items: center; gap: 6px; height: 28px; padding: 0 9px 0 8px; }
.dlg-close { margin-left: auto; }
.dlg-nav { display: flex; align-items: center; gap: 15px; height: 44px; padding: 0 12px; }
.dlg-nav .recent { margin-left: -2px; }
.dlg-nav .up { margin-left: -6px; }
.addr { flex: 1; display: flex; align-items: center; gap: 8px; height: 31px; margin-left: -10px; padding-left: 2px; border: 1px solid #d9d9d9; }
.addr-drop { margin-left: auto; }
.refresh { display: flex; align-items: center; justify-content: center; width: 34px; height: 29px; padding: 0; border: 0; border-left: 1px solid #d9d9d9; background: none; }
.search { display: flex; align-items: center; width: 202px; height: 31px; margin-left: -3px; padding: 0 8px 0 9px; border: 1px solid #d9d9d9; }
.search input { flex: 1; min-width: 0; padding: 0; border: 0; outline: 0; }
.search input::placeholder { color: #666; opacity: 1; }
.dlg-tools { display: flex; align-items: center; height: 32px; padding: 0 15px 0 17px; background: #f4f6fa; border-bottom: 1px solid #e4e6ea; color: #1e395b; }
.dlg-tools button { display: flex; align-items: center; gap: 6px; margin-right: 30px; padding: 0; border: 0; background: none; }
.tri { border: 4px solid transparent; border-top: 5px solid #1e2b45; border-bottom: 0; }
.dlg-tools .view { margin: 0 11px 0 auto; }
.dlg-tools .split { margin: 0 20px 0 22px; }
.dlg-body { display: flex; height: 433px; }
.tree { flex: none; width: 158px; padding-top: 8px; border-right: 1px solid #f0f0f0; }
.tree a { display: flex; align-items: center; gap: 5px; height: 24px; margin-right: 2px; padding-left: 31px; white-space: nowrap; }
.tree .root { margin: 8px 0 0; padding-left: 23px; }
.tree .on { background: #d9d9d9; }
.files { flex: 1; display: grid; grid-template-columns: repeat(7, 105px); grid-auto-rows: 136px; align-items: start; column-gap: 2px; padding: 6px 0 0 15px; overflow: hidden; text-align: center; line-height: 17px; }
.file { min-height: 117px; padding: 1px 3px 2px; border: 1px solid transparent; white-space: nowrap; }
.file svg { width: 96px; height: 96px; }
.hover { background: #e5f3ff; }
.picked { background: #cce8ff; border-color: #99d1ff; }
.dlg-scroll { flex: none; display: flex; flex-direction: column; align-items: center; width: 17px; padding: 4px 0 3px; background: #f0f0f0; color: #555; }
.dlg-thumb { width: 17px; height: 329px; margin: 3px 0 auto; background: #cdcdcd; }
.dlg-foot { position: relative; padding: 11px 17px 13px; background: #f0f0f0; }
.foot-row { display: flex; align-items: center; justify-content: flex-end; gap: 12px; }
.foot-row label { margin-right: -8px; }
.combo, .filter { position: relative; height: 26px; }
.combo { width: 531px; }
.filter { width: 188px; }
.combo input, .filter select { display: block; width: 100%; height: 26px; padding: 0 3px; appearance: none; border: 1px solid #7a7a7a; border-radius: 0; background: #fff; }
.filter select { border-color: #adadad; background: #e1e1e1; }
.combo svg, .filter svg { position: absolute; right: 4px; top: 8px; color: #555; }
.foot-btns { gap: 14px; padding: 6px 1px 0 0; }
.dlg-btn { width: 86px; height: 24px; padding: 0; border: 1px solid #adadad; background: #e1e1e1; }
.primary { border: 2px solid #0b6fc4; }
.grip { position: absolute; right: 2px; bottom: 2px; }
.pointer { position: absolute; left: 1225px; top: 307px; }

/* Overlay text across the whole screen */
.marks { position: absolute; inset: 0; overflow: hidden; pointer-events: none; }
.mark { position: absolute; font-size: 30px; line-height: 40px; white-space: nowrap; color: rgba(0, 0, 0, .48); }
.mark b { font-size: 31px; font-weight: normal; }
.m1 { left: 1460px; top: 0; }
.m2 { left: 1103px; top: 90px; }
.m3 { left: 1396px; top: 180px; }
.m4 { left: 54px; top: 270px; }
.m5 { left: 20px; top: 360px; }
.m6 { left: 179px; top: 450px; }
.m7 { left: 345px; top: 630px; }
.m8 { left: 277px; top: 720px; }
.m9 { left: 825px; top: 810px; }
.m10 { left: 138px; top: 900px; }
.m11 { left: 1321px; top: 540px; }
.caption { position: absolute; left: 840px; top: 951px; margin: 0; font-family: "Noto Sans CJK SC", sans-serif; font-size: 58px; font-weight: 900; line-height: 70px; white-space: nowrap; color: #222; -webkit-text-stroke: 3px #fff; paint-order: stroke fill; filter: drop-shadow(0 0 1px #777); }
```
